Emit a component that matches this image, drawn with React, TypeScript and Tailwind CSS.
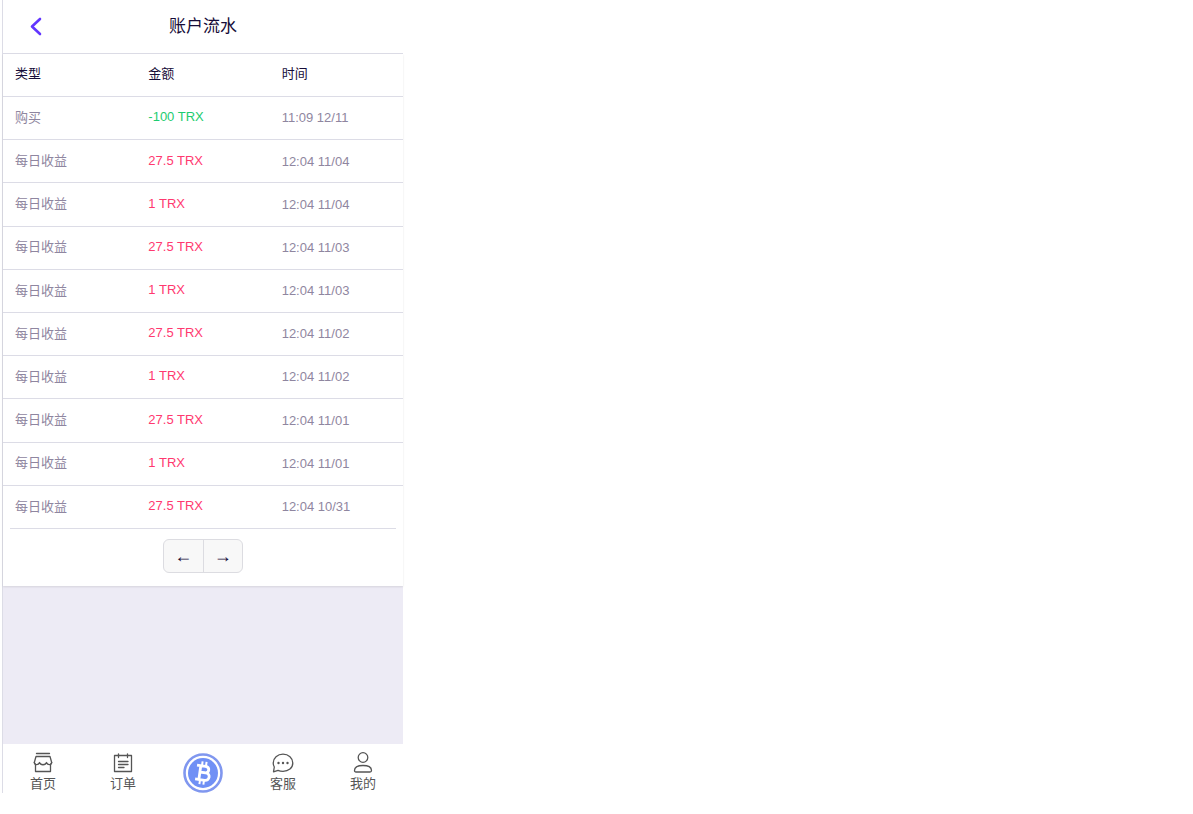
import type { ReactNode } from 'react';

interface Transaction {
  type: string;
  amount: string;
  time: string;
}

const transactions: Transaction[] = [
  { type: '购买', amount: '-100 TRX', time: '11:09 12/11' },
  { type: '每日收益', amount: '27.5 TRX', time: '12:04 11/04' },
  { type: '每日收益', amount: '1 TRX', time: '12:04 11/04' },
  { type: '每日收益', amount: '27.5 TRX', time: '12:04 11/03' },
  { type: '每日收益', amount: '1 TRX', time: '12:04 11/03' },
  { type: '每日收益', amount: '27.5 TRX', time: '12:04 11/02' },
  { type: '每日收益', amount: '1 TRX', time: '12:04 11/02' },
  { type: '每日收益', amount: '27.5 TRX', time: '12:04 11/01' },
  { type: '每日收益', amount: '1 TRX', time: '12:04 11/01' },
  { type: '每日收益', amount: '27.5 TRX', time: '12:04 10/31' },
];

const NavIcon = ({ children }: { children: ReactNode }) => (
  <svg
    viewBox="0 -1 22 22"
    className="size-[22px] shrink-0"
    fill="none"
    stroke="currentColor"
    strokeWidth="1.3"
    strokeLinecap="round"
    strokeLinejoin="round"
    aria-hidden="true"
  >
    {children}
  </svg>
);

const HomeIcon = () => (
  <NavIcon>
    <path d="M4.5 .5h13" />
    <path d="M3.5 11.5 2.3 9.500 4 3.500h14l1.700 6-1.200 2" />
    <path d="M2.300 9.500c.3 2.800 4 3 5.200 0 1 3 6 3 7 0 1.200 3 4.900 2.800 5.200 0" />
    <path d="M3.5 11.500v7h15v-7" />
  </NavIcon>
);

const OrderIcon = () => (
  <NavIcon>
    <path d="M2.5 2.500h17v16h-17zM6.500 .8v3.700M15.500 .8v3.700" />
    <path d="M6.500 8.500h9.500M6.500 11.500h9.500M6.500 14.500h5.500" />
  </NavIcon>
);

const ServiceIcon = () => (
  <NavIcon>
    <path d="M1.500 18.800l.8-4.800A8 8 0 0 1 1.200 10C1.200 5 5.500 1.200 11 1.200S20.800 5 20.800 10 16.500 18.300 11 18.300c-2 0-3.500-.3-5-1z" />
    <g fill="currentColor" stroke="none">
      <circle cx="6.500" cy="10" r="1.200" />
      <circle cx="11" cy="10" r="1.200" />
      <circle cx="15.500" cy="10" r="1.200" />
    </g>
  </NavIcon>
);

const ProfileIcon = () => (
  <NavIcon>
    <circle cx="11" cy="4.500" r="4.800" />
    <path d="M2.500 17.500c0-3.500 3-5 8.500-5s8.500 1.500 8.500 5c0 1-.5 1.500-1.500 1.500H4c-1 0-1.500-.5-1.500-1.500z" />
  </NavIcon>
);

const CoinIcon = () => (
  <svg viewBox="0 0 40 40" className="size-10" aria-hidden="true">
    <circle cx="20" cy="20" r="18.500" fill="#fff" stroke="#8097ef" strokeWidth="2.600" />
    <circle cx="20" cy="20" r="15" fill="#7090f5" />
    <g transform="rotate(8 20 20)" fill="none" stroke="#fff" strokeWidth="2.800">
      <path d="M13 13h8.500c5 0 5 6.500 0 6.500H17M17 19.500h5.500c5.500 0 5.500 7.500 0 7.500H13M16.800 13v14" />
      <path d="M18 8.500v4M22 8.500v4M18 27.500v4M22 27.500v4" strokeWidth="2" />
    </g>
  </svg>
);

const NavItem = ({ label, children }: { label: string; children: ReactNode }) => (
  <a href="#" className="flex flex-1 flex-col items-center pt-2 text-[13px] leading-5 text-[#555]">
    {children}
    <span>{label}</span>
  </a>
);

export default function App() {
  return (
    <div className="h-screen bg-white pb-[21px] pl-[2px] font-['Liberation_Sans','Noto_Sans_CJK_SC',sans-serif] text-[13px] text-[#160c38]">
      <div className="flex h-full max-w-[401px] flex-col border-l border-[#dcdce6] bg-[#edebf5]">
        {/* Header */}
        <header className="grid h-[54px] shrink-0 grid-cols-[66px_1fr_66px] items-center border-b border-[#dcdce6] bg-white">
          <button type="button" aria-label="返回" className="flex justify-center">
            <svg
              viewBox="0 0 24 24"
              className="size-6"
              fill="none"
              stroke="#6236ff"
              strokeWidth="2.600"
              strokeLinecap="round"
              strokeLinejoin="round"
              aria-hidden="true"
            >
              <path d="M16 4l-8 7.500 8 7.500" />
            </svg>
          </button>
          <h1 className="text-center text-[17px]">账户流水</h1>
        </header>

        {/* Transactions */}
        <main className="shrink-0 bg-white pb-[13px] shadow-[0_1px_2px_rgba(0,0,0,0.1)]">
          <table className="h-[475px] w-full table-fixed border-separate border-spacing-0 text-left">
            <thead>
              <tr className="h-[43px]">
                {['类型', '金额', '时间'].map((title) => (
                  <th key={title} className="border-b border-[#dcdce6] px-3 pb-[2px] font-normal">
                    {title}
                  </th>
                ))}
              </tr>
            </thead>
            <tbody className="[&>tr:last-child>td]:border-transparent">
              {transactions.map((row, i) => (
                <tr key={i}>
                  <td className="border-b border-[#dcdce6] px-3 pb-px text-[#8f86a0]">{row.type}</td>
                  <td
                    className={`border-b border-[#dcdce6] px-3 pb-[2px] ${
                      row.amount.startsWith('-') ? 'text-[#1dcc70]' : 'text-[#ff396f]'
                    }`}
                  >
                    {row.amount}
                  </td>
                  <td className="border-b border-[#dcdce6] px-3 text-[#8f86a0]">{row.time}</td>
                </tr>
              ))}
            </tbody>
          </table>
          <hr className="mx-[7px] -mt-px border-[#dcdce6]" />

          {/* Pager */}
          <div className="mt-[10px] flex justify-center">
            <div className="flex h-[34px] w-20 overflow-hidden rounded-md border border-[#dcdce1] bg-[#f8f8f8] text-lg">
              <button type="button" aria-label="上一页" className="flex-1 border-r border-[#dcdce1]">
                ←
              </button>
              <button type="button" aria-label="下一页" className="flex-1">
                →
              </button>
            </div>
          </div>
        </main>

        {/* Bottom navigation */}
        <nav className="mt-auto flex h-[49px] shrink-0 bg-white">
          <NavItem label="首页">
            <HomeIcon />
          </NavItem>
          <NavItem label="订单">
            <OrderIcon />
          </NavItem>
          <a href="#" aria-label="BTC" className="flex flex-1 items-end justify-center">
            <CoinIcon />
          </a>
          <NavItem label="客服">
            <ServiceIcon />
          </NavItem>
          <NavItem label="我的">
            <ProfileIcon />
          </NavItem>
        </nav>
      </div>
    </div>
  );
}
